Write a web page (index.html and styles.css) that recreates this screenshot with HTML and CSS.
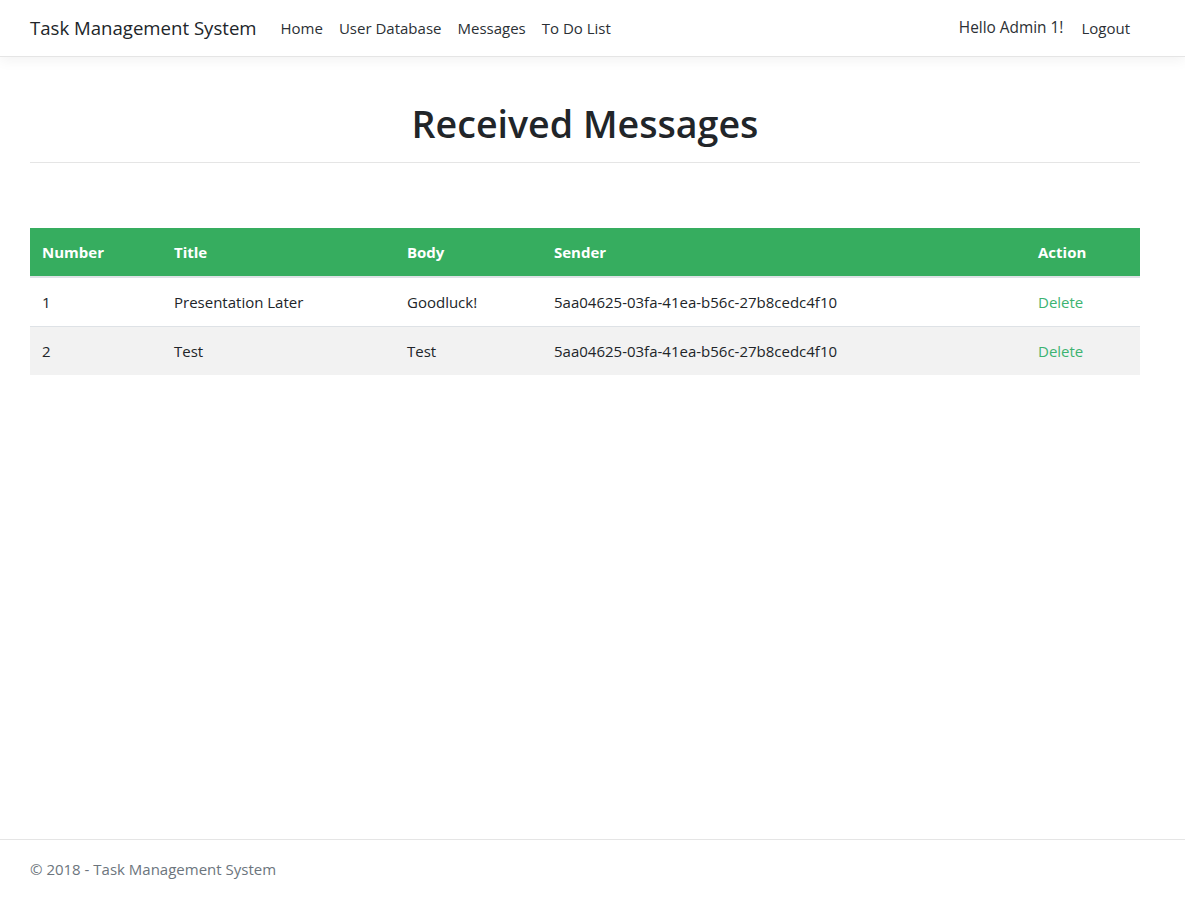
FILE: index.html
```html
<!DOCTYPE html>
<html lang="en">
<head>
<meta charset="utf-8">
<title>Received Messages - Task Management System</title>
<link rel="stylesheet" href="styles.css">
</head>
<body>
<header class="navbar">
  <div class="container nav-inner">
    <a class="brand" href="#">Task Management System</a>
    <ul class="nav-links">
      <li><a class="nav-link" href="#">Home</a></li>
      <li><a class="nav-link" href="#">User Database</a></li>
      <li><a class="nav-link" href="#">Messages</a></li>
      <li><a class="nav-link" href="#">To Do List</a></li>
    </ul>
    <ul class="nav-right">
      <li><span class="nav-link">Hello Admin 1!</span></li>
      <li><a class="nav-link" href="#">Logout</a></li>
    </ul>
  </div>
</header>
<main class="container main">
  <h1 class="title">Received Messages</h1>
  <hr class="rule">
  <table class="msg-table">
    <colgroup>
      <col class="c-num"><col class="c-title"><col class="c-body"><col class="c-sender"><col class="c-action">
    </colgroup>
    <thead>
      <tr><th>Number</th><th>Title</th><th>Body</th><th>Sender</th><th>Action</th></tr>
    </thead>
    <tbody>
      <tr><td>1</td><td>Presentation Later</td><td>Goodluck!</td><td>5aa04625-03fa-41ea-b56c-27b8cedc4f10</td><td><a class="del" href="#">Delete</a></td></tr>
      <tr class="alt"><td>2</td><td>Test</td><td>Test</td><td>5aa04625-03fa-41ea-b56c-27b8cedc4f10</td><td><a class="del" href="#">Delete</a></td></tr>
    </tbody>
  </table>
</main>
<footer class="footer">
  <div class="container">&copy; 2018 - Task Management System</div>
</footer>
</body>
</html>
```
FILE: styles.css
```css
* { box-sizing: border-box; }
html, body { margin: 0; padding: 0; }
body {
  font-family: "Open Sans", "Noto Sans", "Liberation Sans", sans-serif;
  font-size: 15px;
  line-height: 24px;
  color: #212529;
  background: #fff;
  min-height: 100vh;
  display: flex;
  flex-direction: column;
}
a { text-decoration: none; }
.container {
  width: 1140px;
  padding: 0 15px;
  margin-left: 15px;
}
.navbar {
  height: 57px;
  border-bottom: 1px solid #e5e5e5;
  box-shadow: 0 4px 12px rgba(0,0,0,.05);
  background: #fff;
}
.nav-inner {
  display: flex;
  align-items: center;
  height: 56px;
  padding-right: 17px;
}
.brand {
  font-size: 18.6px;
  color: #212529;
  margin-right: 16px;
  line-height: 30px;
}
.nav-links, .nav-right {
  list-style: none;
  margin: 0;
  padding: 0;
  display: flex;
}
.nav-right { margin-left: auto; }
.nav-right li:first-child .nav-link { font-size: 15.4px; margin-right: 2px; }
.nav-link {
  display: block;
  padding: 8px;
  color: #2b3035;
}
.main {
  padding-top: 43px;
  flex: 1;
}
.title {
  margin: 0 0 14px;
  font-size: 37.6px;
  line-height: 48px;
  font-weight: 600;
  text-align: center;
}
.rule {
  margin: 0 0 65px;
  border: 0;
  border-top: 1px solid #e5e5e5;
}
.msg-table {
  width: 1110px;
  border-collapse: collapse;
  table-layout: fixed;
}
.c-num { width: 132px; }
.c-title { width: 233px; }
.c-body { width: 147px; }
.c-sender { width: 484px; }
.c-action { width: 114px; }
.msg-table th {
  background: #36ad5f;
  color: #fff;
  font-weight: 700;
  text-align: left;
  padding: 12px;
  border-bottom: 2px solid #dee2e6;
}
.msg-table td {
  padding: 12px;
  border-top: 1px solid #dee2e6;
}
.msg-table tbody tr:first-child td { border-top: 0; }
.msg-table tr.alt td { background: #f2f2f2; }
.del { color: #3cb371; }
.footer {
  border-top: 1px solid #e5e5e5;
  line-height: 59px;
  color: #6c757d;
  white-space: nowrap;
}
```
